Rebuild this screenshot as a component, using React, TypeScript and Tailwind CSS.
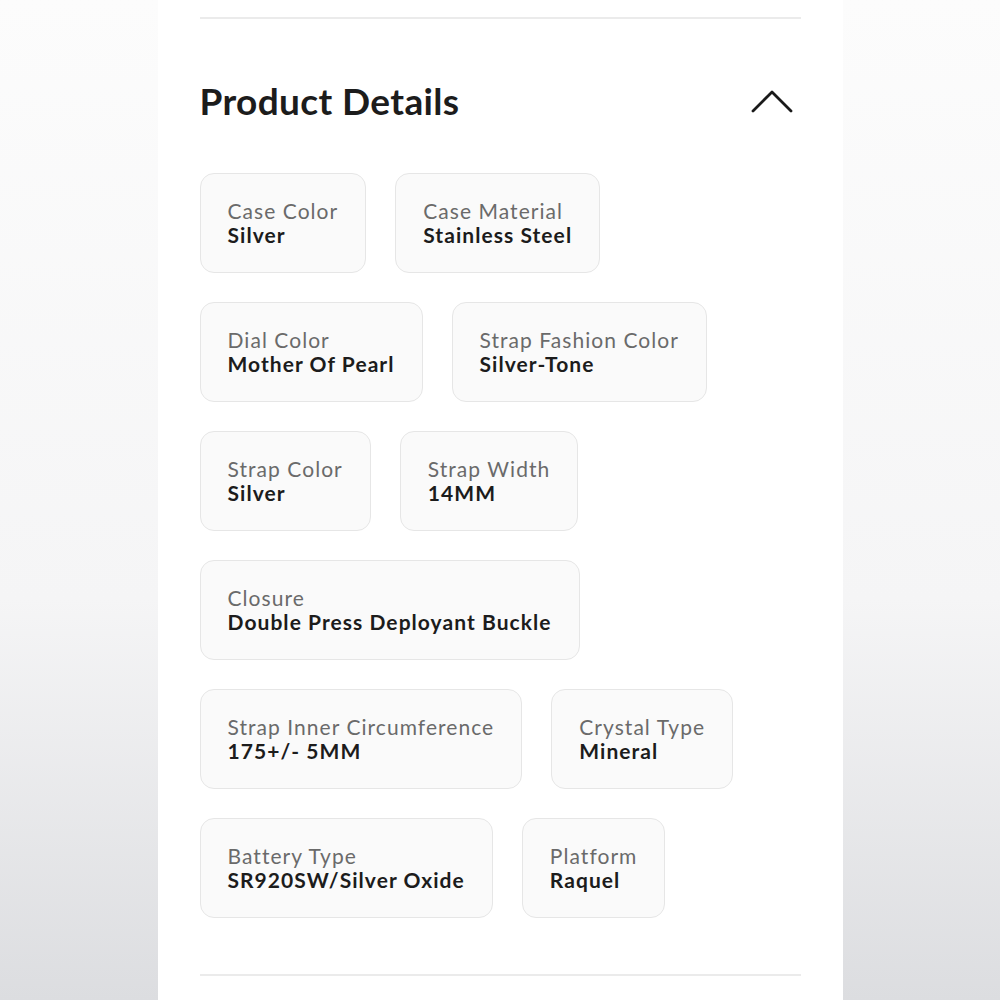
const rows: { label: string; value: string }[][] = [
  [
    { label: "Case Color", value: "Silver" },
    { label: "Case Material", value: "Stainless Steel" },
  ],
  [
    { label: "Dial Color", value: "Mother Of Pearl" },
    { label: "Strap Fashion Color", value: "Silver-Tone" },
  ],
  [
    { label: "Strap Color", value: "Silver" },
    { label: "Strap Width", value: "14MM" },
  ],
  [{ label: "Closure", value: "Double Press Deployant Buckle" }],
  [
    { label: "Strap Inner Circumference", value: "175+/- 5MM" },
    { label: "Crystal Type", value: "Mineral" },
  ],
  [
    { label: "Battery Type", value: "SR920SW/Silver Oxide" },
    { label: "Platform", value: "Raquel" },
  ],
];

export default function App() {
  return (
    <div
      className="min-h-[1000px] w-full bg-linear-to-b from-[#fcfcfc] via-[#f5f5f6] via-60% to-[#dcdde0]"
      style={{ fontFamily: "Lato, 'Open Sans', sans-serif" }}
    >
      <div className="mx-auto min-h-[1000px] w-[685px] bg-white px-[42px] pt-[17px]">
        <div className="h-[2px] bg-[#ebebeb]" />

        {/* Header */}
        <div className="mt-[57px] mb-[49px] flex h-[48px] items-center justify-between">
          <h2 className="text-[37px] font-bold leading-none tracking-[0.01em] text-[#1c1c1c]">Product Details</h2>
          <svg width="44" height="26" viewBox="0 0 44 26" className="mr-[7px] mt-[2px]" fill="none">
            <polyline points="3,23 22,4 41,23" stroke="#1a1a1a" strokeWidth="2.8" strokeLinecap="round" strokeLinejoin="round" />
          </svg>
        </div>

        {/* Spec cards */}
        <div className="flex flex-col gap-[29px]">
          {rows.map((row, i) => (
            <div key={i} className="flex gap-[29px]">
              {row.map((item) => (
                <SpecCard key={item.label} label={item.label} value={item.value} />
              ))}
            </div>
          ))}
        </div>

        <div className="mt-[56px] h-[2px] bg-[#ebebeb]" />
      </div>
    </div>
  );
}

function SpecCard({ label, value }: { label: string; value: string }) {
  return (
    <div className="flex h-[100px] flex-col justify-center rounded-[14px] border border-[#e6e6e6] bg-[#fafafa] px-[27px]">
      <span className="text-[21px] leading-[24px] tracking-[0.05em] text-[#6a6a6a]">{label}</span>
      <span className="text-[21px] font-bold leading-[24px] tracking-[0.05em] text-[#1c1c1c]">{value}</span>
    </div>
  );
}
